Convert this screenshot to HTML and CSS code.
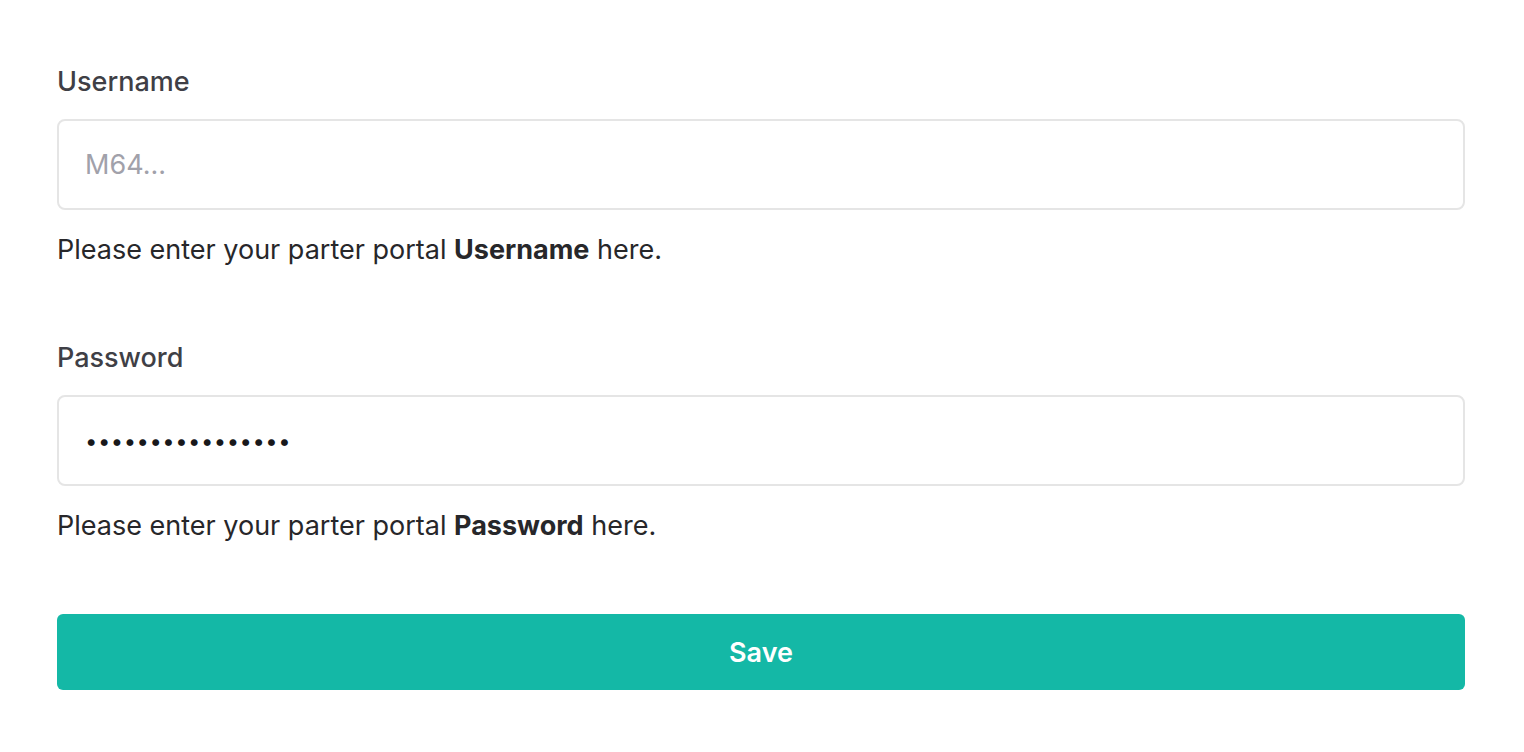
FILE: index.html
```html
<!DOCTYPE html>
<html lang="en">
<head>
    <meta charset="UTF-8">
    <meta name="viewport" content="width=device-width, initial-scale=1.0">
    <title>Partner Portal Settings</title>
    <link rel="stylesheet" href="styles.css">
</head>
<body>
    <form class="settings-form">
        <div class="field">
            <label for="username" class="field-label">Username</label>
            <input type="text" id="username" class="field-input" placeholder="M64...">
            <p class="field-help">Please enter your parter portal <strong>Username</strong> here.</p>
        </div>
        <div class="field field-last">
            <label for="password" class="field-label">Password</label>
            <input type="password" id="password" class="field-input field-secret" value="supersecretpass1">
            <p class="field-help">Please enter your parter portal <strong>Password</strong> here.</p>
        </div>
        <button type="button" class="save-button">Save</button>
    </form>
</body>
</html>
```

FILE: styles.css
```css
body {
    margin: 0;
    background-color: #fff;
    font-family: Inter, "Noto Sans", sans-serif;
    color: #27272a;
}
.settings-form {
    display: flex;
    flex-direction: column;
    padding: 64px 59px 64px 57px;
}
.field {
    display: flex;
    flex-direction: column;
    margin-bottom: 72px;
}
.field-last {
    margin-bottom: 70px;
}
.field-label {
    font-size: 27px;
    font-weight: 500;
    line-height: 36px;
    color: #3f3f46;
    margin-bottom: 19px;
}
.field-input {
    box-sizing: border-box;
    height: 91px;
    padding: 0 26px;
    border: 2px solid #e5e5e5;
    border-radius: 8px;
    font-family: inherit;
    font-size: 27px;
    color: #18181b;
    outline: none;
}
.field-input::placeholder {
    color: #a1a1aa;
}
.field-secret {
    font-size: 22px;
    letter-spacing: 0.5px;
}
.field-help {
    margin: 22px 0 0;
    font-size: 27px;
    line-height: 36px;
}
.field-help strong {
    font-weight: 700;
}
.save-button {
    height: 76px;
    border: none;
    border-radius: 6px;
    background-color: #14b8a6;
    color: #fff;
    font-family: inherit;
    font-size: 27px;
    font-weight: 600;
    cursor: pointer;
}
```
